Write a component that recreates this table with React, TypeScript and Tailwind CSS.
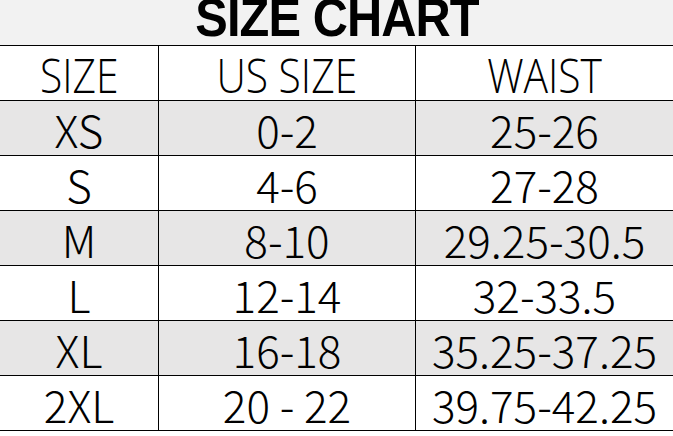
const rows = [
  { size: "XS", us: "0-2", waist: "25-26" },
  { size: "S", us: "4-6", waist: "27-28" },
  { size: "M", us: "8-10", waist: "29.25-30.5" },
  { size: "L", us: "12-14", waist: "32-33.5" },
  { size: "XL", us: "16-18", waist: "35.25-37.25" },
  { size: "2XL", us: "20 - 22", waist: "39.75-42.25" },
];

const headFont = { fontFamily: "'Open Sans', 'Liberation Sans', sans-serif" };

function SizeChart() {
  return (
    <div className="w-[673px] h-[436px] bg-white overflow-hidden">
      <div className="h-[45px] bg-[#f2f2f2] flex justify-center items-end overflow-hidden">
        <span className="font-['Liberation_Sans',sans-serif] font-bold text-[53px] leading-none text-black tracking-[-1px] scale-x-[0.92] translate-y-[-1px]">
          SIZE CHART
        </span>
      </div>
      <div className="border-t border-black">
        <div className="grid grid-cols-[159px_257px_1fr] h-[55px] border-b border-black">
          <HeadCell text="SIZE" border />
          <HeadCell text="US SIZE" border />
          <HeadCell text="WAIST" />
        </div>
        {rows.map((r, i) => (
          <div
            key={r.size}
            className={`grid grid-cols-[159px_257px_1fr] h-[55px] border-b border-black ${
              i % 2 === 0 ? "bg-[#e7e6e6]" : "bg-white"
            }`}
          >
            <Cell text={r.size} border />
            <Cell text={r.us} border />
            <Cell text={r.waist} />
          </div>
        ))}
      </div>
    </div>
  );
}

const HeadCell = ({ text, border }: { text: string; border?: boolean }) => {
  return (
    <div
      className={`flex items-center justify-center ${border ? "border-r border-black" : ""}`}
    >
      <span
        style={headFont}
        className="text-[48px] font-light leading-none text-black scale-x-[0.85] translate-y-[2px] whitespace-pre"
      >
        {text}
      </span>
    </div>
  );
};

const Cell = ({ text, border }: { text: string; border?: boolean }) => {
  return (
    <div
      className={`flex items-center justify-center ${border ? "border-r border-black" : ""}`}
    >
      <span className="font-['Noto_Sans_CJK_JP',sans-serif] font-light text-[44px] leading-none text-black translate-y-[1px] whitespace-pre">
        {text}
      </span>
    </div>
  );
};

export default function App() {
  return <SizeChart />;
}
